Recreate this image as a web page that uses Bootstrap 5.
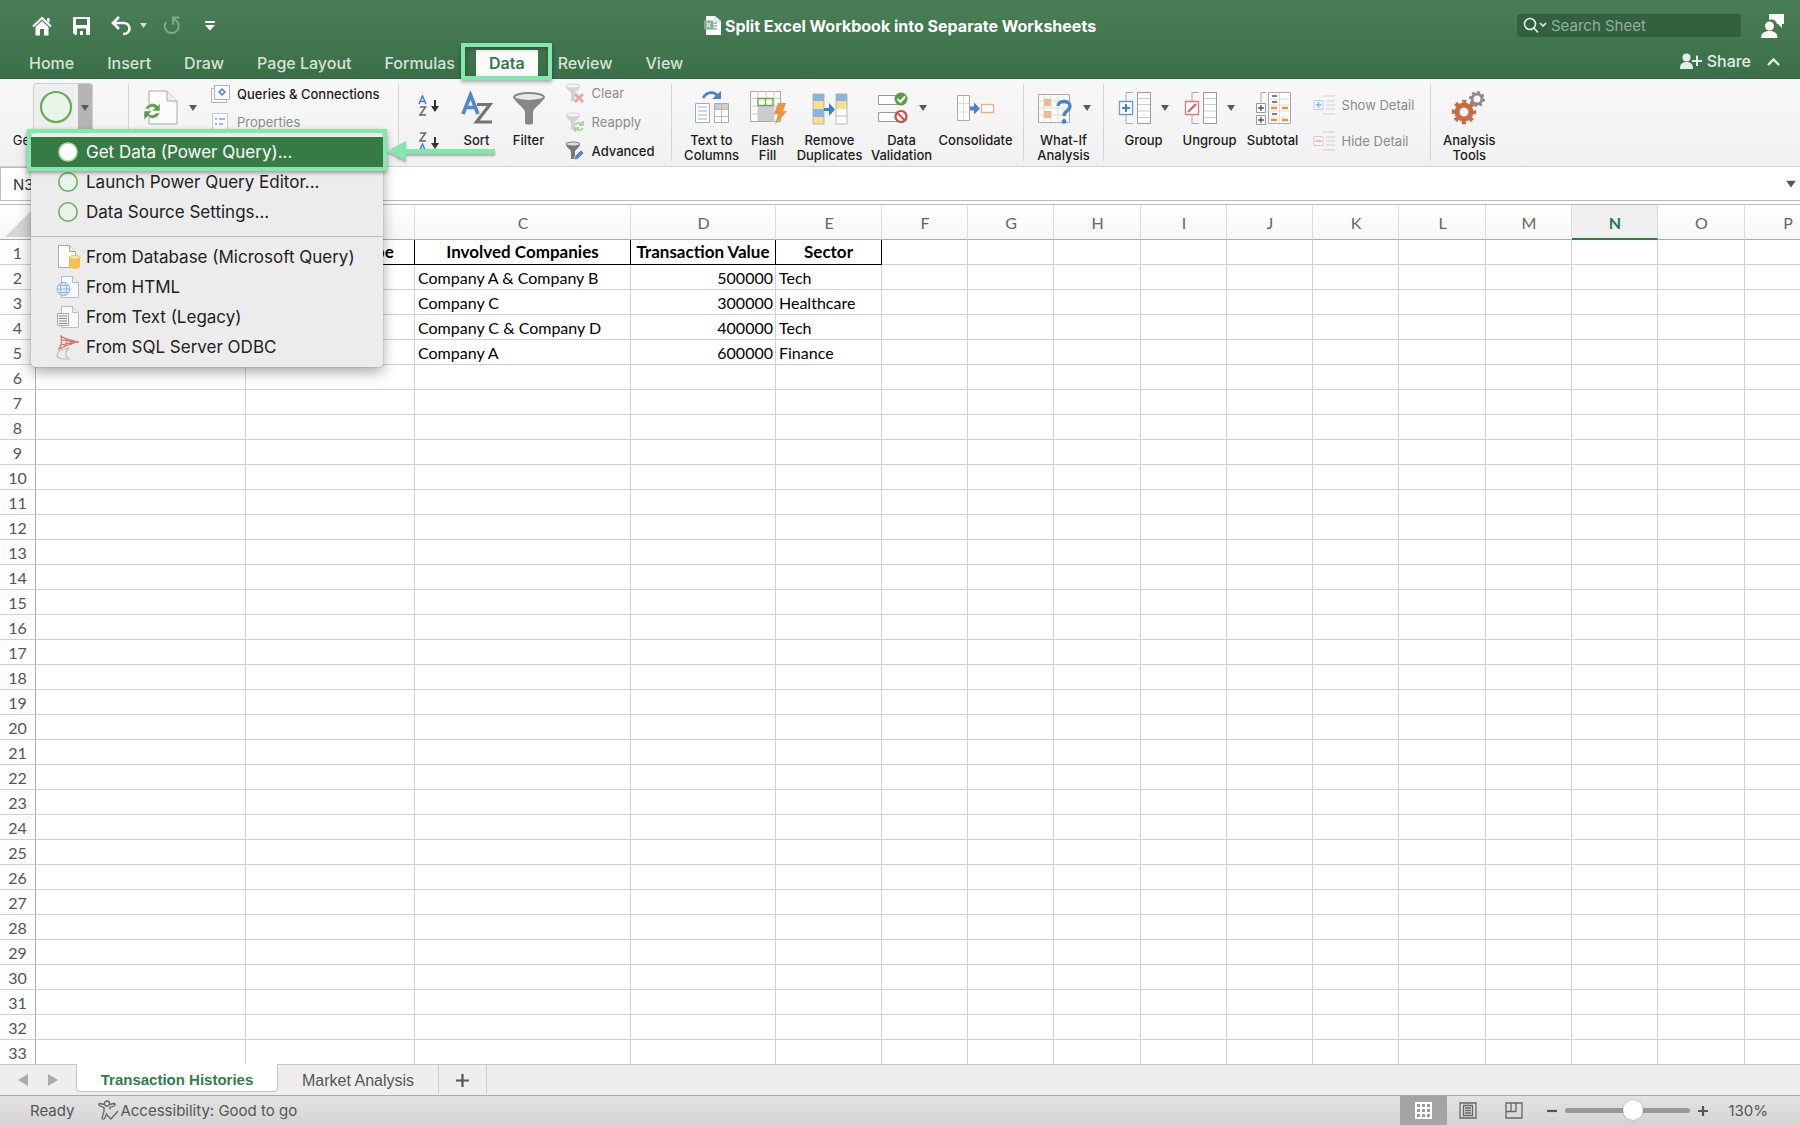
<!DOCTYPE html>
<html lang="en">
<head>
<meta charset="utf-8">
<meta name="viewport" content="width=device-width, initial-scale=1">
<title>Split Excel Workbook into Separate Worksheets</title>
<link href="https://cdn.jsdelivr.net/npm/bootstrap@5.3.0/dist/css/bootstrap.min.css" rel="stylesheet">
<style>
body{font-family:Inter,"Liberation Sans",sans-serif;font-size:13px;color:#1c1c1c;line-height:15px}
button{font:inherit;color:inherit;background:none;border:0;padding:0}
svg{display:block;flex:none}
.app-head{background:linear-gradient(#497e57,#3a6f48);color:#fff;border-bottom:1px solid #2f6a41}
.title-row{height:44px;padding-top:7px}
.title-side{flex:1 1 0}
.doc-title{font-size:16px;font-weight:700;line-height:20px}
.quick>:first-child{margin-left:32px}
.search-box{width:224px;height:23px;background:#33603f;border-radius:3px;padding-left:6px}
.search-box input{background:none;border:0;outline:0;color:#fff;font-size:15px;line-height:20px;padding:0;min-width:0}
.search-box input::placeholder{color:#8fb09a;opacity:1}
.tab-row{height:34px}
.ribbon-tabs{padding:3px 0 0 13px}
.ribbon-tabs a{font-size:16px;font-weight:500;line-height:20px;color:#d5e3d8;text-decoration:none;padding:0 16px;margin-right:1px}
.ribbon-tabs .tab-on{position:relative;padding:0 17px}
.ribbon-tabs .tab-on a{display:block;color:#2f7a46;font-weight:600;background:#fbfbfb;height:26px;line-height:26px;padding:0 13px;margin:0 -13px}
.tab-mark{position:absolute;left:-11px;right:-10px;top:-7px;bottom:-4px;border:4px solid #83e8ae;box-shadow:0 2px 4px rgba(0,0,0,.35),inset 0 2px 4px rgba(0,0,0,.3);pointer-events:none}
.share{font-size:16px;font-weight:500;line-height:20px;color:#e2ede5}
.ribbon{height:88px;background:linear-gradient(#f8f8f8,#f1f1f1);border-bottom:1px solid #cfcfcf}
.rule{width:1px;height:77px;background:#d4d4d4;margin:5px 9px 0 8px;flex:none}
.rule.wide{margin-left:16px}
.rule.wider{margin-left:18px;margin-right:18px}
.rule.first{margin:5px 14px 0 16px}
.ml9{margin-left:10px}.ml14{margin-left:14px}
.rb{display:flex;flex-direction:column;align-items:center;padding-top:11px;text-align:center;white-space:nowrap;flex:none}
.rb .ic{display:flex;align-items:center;gap:10px;height:36px;margin-bottom:7px}
.w50{width:50px}.w52{width:52px}.w62{width:62px}.w74{width:74px}.w70{width:70px}.w78{width:78px}.w56{width:56px}.w58{width:58px}.w98{width:98px}
.caret{width:0;height:0;border:4px solid transparent;border-top:6px solid #5a5a5a;border-bottom:0;flex:none}
.line-btn{display:flex;align-items:center;gap:7px;white-space:nowrap}
.conn{padding-top:6px;gap:10px}
.dim{color:#8b8b8b}
.split{border:1px solid #cdcdcd;border-radius:3px;background:#efefef;height:50px;overflow:hidden}
.split .arm{width:14px;align-self:stretch;background:#b5b5b5;display:flex;align-items:center;justify-content:center}
.formula{height:38px;background:#fff;border-bottom:1px solid #b9b9b9;padding-bottom:3px}
.formula-in{border:0;border-bottom:1px solid #b9b9b9;width:100%;outline:0}
.name-box{width:110px;border:1px solid #bdbdbd;font-size:15px;padding:0 12px;color:#333;outline:0}
.sheet-wrap{flex:1 1 0;min-height:0;overflow:hidden;font-family:Lato,"Liberation Sans",sans-serif}
.grid{table-layout:fixed;border-collapse:separate;border-spacing:0;width:1830px;font-size:16px;line-height:20px;color:#000}
.grid th,.grid td{padding:3px 2px 1px 3px;height:25px;border-right:1px solid #d0d0d0;border-bottom:1px solid #d0d0d0;white-space:nowrap;overflow:hidden}
.grid thead th{height:35px;background:linear-gradient(#fff,#f7f7f7);color:#666;font-weight:400;text-align:center;border-bottom-color:#ababab;border-right-color:#dcdcdc}
.grid thead th.on{color:#257a43;font-weight:700;background:#efefef;border-bottom:2px solid #2f7a46}
.grid thead .corner{padding:0 0 2px 5px;vertical-align:bottom}
.grid tbody th{background:#fdfdfd;color:#555;font-weight:400;text-align:center;padding:3px 0 1px;border-right-color:#b0b0b0}
.grid td.hd{font-size:17px;font-weight:700;text-align:center;border-color:#000;padding:2px}
.grid td.num{text-align:right}
.tabs-bar{height:32px;background:#eee;border-top:1px solid #c6c6c6;border-bottom:1px solid #aaa;font-family:"Liberation Sans",Arial,sans-serif;font-size:16px;padding-left:17px}
.sheet-nav{gap:20px;width:59px}
.sheet-tab{height:28px;color:#555;border-right:1px solid #c9c9c9;padding-top:2px}
.sheet-tab.act{background:#fff;color:#2c8048;font-weight:700;font-size:15px;margin-top:-1px;width:202px;border:1px solid #c4c4c4;border-top:0;border-radius:0 0 4px 4px;padding-top:4px}
.status{height:29px;background:linear-gradient(#e3e3e3,#d4d4d4);color:#565656;font-size:15px;padding-left:30px}
.view-on{background:#a4a4a4;width:47px;height:29px}
.zoomer{appearance:none;-webkit-appearance:none;width:125px;height:20px;background:none;margin:0}
.zoomer::-webkit-slider-runnable-track{height:5px;border-radius:3px;background:#999}
.zoomer::-webkit-slider-thumb{-webkit-appearance:none;width:20px;height:20px;border-radius:50%;background:#fff;margin-top:-8px;box-shadow:0 0 2px rgba(0,0,0,.3)}
.drop{position:absolute;left:31px;top:133px;width:352px;background:#ececec;border-radius:4px;box-shadow:0 5px 14px rgba(0,0,0,.35),0 0 1px rgba(0,0,0,.5);padding:4px 0 5px;font-size:17px;line-height:20px;color:#222}
.drop button{display:flex;align-items:center;width:100%;height:30px;padding-left:25px;gap:5px;text-align:left;white-space:nowrap}
.drop .pick{position:relative;background:#377b44;color:#fff}
.pick-mark{position:absolute;left:-4px;right:-4px;top:-8px;bottom:-4px;border:4px solid #83e8ae;box-shadow:0 2px 4px rgba(0,0,0,.35);pointer-events:none}
.drop hr{margin:9px 0 5px;border-top:1px solid #bbb;opacity:1}
.pointer{position:absolute;left:386px;top:139px;filter:drop-shadow(0 2px 1px rgba(0,0,0,.3))}
</style>
<script src="https://cdn.jsdelivr.net/npm/bootstrap@5.3.0/dist/js/bootstrap.bundle.min.js"></script>
</head>
<body class="vh-100 d-flex flex-column overflow-hidden position-relative">
<header class="app-head">
  <div class="title-row d-flex align-items-center">
    <div class="title-side quick d-flex align-items-center">
      <button aria-label="Home"><svg width="20" height="20" viewBox="0 0 20 20"><path d="M1 10.500 10 2l9 8.500" fill="none" stroke="#fff" stroke-width="2.200"/><path d="M15 2h2.500v5L15 5zM3.500 11 10 5l6.500 6v8.500h-4.500V13H8v6.500H3.500z" fill="#fff"/></svg></button>
      <button class="ms-3 ps-1" aria-label="Save"><svg width="19" height="20" viewBox="0 0 19 20"><path d="M1 1h17v18H3l-2-2z" fill="#fff"/><path d="M4 3h11v6H4zM5 12.500h9V19h-3v-4H8v4H5z" fill="#417650"/></svg></button>
      <button class="ms-3 ps-1 d-flex align-items-center gap-2" aria-label="Undo"><svg width="21" height="20" viewBox="0 0 21 20"><path d="M8 1 2 7l6 6M2.500 7H13a5.500 5.500 0 0 1 0 11h-1" fill="none" stroke="#fff" stroke-width="2.600"/></svg><svg width="7" height="5"><path d="M0 0h7L3.500 5z" fill="#cfe0d3"/></svg></button>
      <button class="ms-3" aria-label="Redo"><svg width="17" height="20" viewBox="0 0 17 20"><path d="M3 6a7 7 0 1 0 10-1.500M16.500 1.500H10v7M10 2l4 3.500" fill="none" stroke="#82a88d" stroke-width="2"/></svg></button>
      <button class="ms-4" aria-label="Customize toolbar"><svg width="12" height="10"><path d="M1 0h10v2H1zM1 4h10L6 9.500z" fill="#fff"/></svg></button>
    </div>
    <div class="d-flex align-items-center gap-1">
      <svg width="17" height="19" viewBox="0 0 17 19"><path d="M2 0h9l6 5v14H2z" fill="#fff"/><path d="M11 0v5h6" fill="none" stroke="#bcd3c3"/><path d="M0 4.500h9v9H0z" fill="#7fae8e"/><path d="M9 6h4v2H9zm0 3h4v2H9zm0 3h4v2H9z" fill="#a9c8b3"/><path d="m2.500 6.500 4 5m0-5-4 5" stroke="#d7e7dc" stroke-width="1.500"/></svg>
      <span class="doc-title">Split Excel Workbook into Separate Worksheets</span>
    </div>
    <div class="title-side d-flex align-items-center justify-content-end">
      <label class="search-box d-flex align-items-center">
        <svg width="24" height="17" viewBox="0 0 24 17" fill="none" stroke="#e6efe8" stroke-width="1.600"><circle cx="7" cy="7" r="5.500"/><path d="m11 11 4 4.500M17 6l3 3 3-3"/></svg>
        <input class="ms-1 flex-grow-1" type="text" placeholder="Search Sheet" aria-label="Search Sheet">
      </label>
      <button class="ms-3 ps-1 me-3" aria-label="Account"><svg width="23" height="24" viewBox="0 0 23 24"><path d="M8 0h15v10h-2v4l-4-4h-1A6 6 0 0 0 9 5.500L8 6z" fill="#fff"/><circle cx="8.500" cy="12" r="4.500" fill="#fff"/><path d="M0 24c0-5 3.500-7 8.500-7s8 2 8 7z" fill="#fff"/></svg></button>
    </div>
  </div>
  <div class="tab-row d-flex align-items-center justify-content-between">
    <nav class="ribbon-tabs d-flex align-items-center" aria-label="Ribbon">
      <a href="#">Home</a><a href="#">Insert</a><a href="#">Draw</a><a href="#">Page Layout</a><a href="#">Formulas</a><div class="tab-on"><a href="#" aria-current="page">Data</a><span class="tab-mark"></span></div><a href="#">Review</a><a href="#">View</a>
    </nav>
    <div class="d-flex align-items-center pe-3">
      <button class="share d-flex align-items-center gap-1"><svg width="23" height="16" viewBox="0 0 23 16" fill="#e2ede5"><circle cx="6.500" cy="4.500" r="4"/><path d="M0 16c0-5 2-7 6.500-7s6.500 2 6.500 7zM16 2.500h2V7h4v2h-4v4h-2V9h-4V7h4z"/></svg>Share</button>
      <button class="ms-3 me-1" aria-label="Collapse ribbon"><svg width="13" height="9" viewBox="0 0 13 9"><path d="m1 8 5.500-5.500L12 8" fill="none" stroke="#e2ede5" stroke-width="2.400"/></svg></button>
    </div>
  </div>
</header>

<section class="ribbon d-flex" aria-label="Data tools">
  <button class="rb w98 ml14"><span class="ic"><span class="split d-flex align-items-center"><svg width="44" height="48"><circle cx="22" cy="23" r="15" fill="#eaf5ea" stroke="#69ab58" stroke-width="2.200"/></svg><span class="arm"><i class="caret"></i></span></span></span>Get Data (Power<br>Query)</button>
  <i class="rule first"></i>
  <button class="rb"><span class="ic"><svg width="36" height="36" viewBox="0 0 36 36"><path d="M6 1h18l10 10v23H6z" fill="#fcfcfc" stroke="#aaa"/><path d="M24 1v10h10" fill="#eee" stroke="#aaa"/><path d="M2 19c3-6 9-7 13-3l2-3v8H9l3-3c-3-2-5-1-7 1zM17 23c-3 6-9 7-12 3l-4 4v-9h8l-3 3c3 2 5 1 7-1z" fill="#5a9c45" stroke="#fff" stroke-width=".5"/></svg><i class="caret ms-n2"></i></span></button>
  <div class="conn d-flex flex-column align-items-start ml14">
    <button class="line-btn fw-medium"><svg width="19" height="18" viewBox="0 0 19 18"><path d="M3.500.500h15v14h-15zM3 3.500H.500v14h15V15" fill="#fdfdfd" stroke="#b3b3b3"/><path d="m11 3 4 4-4 4-4-4z" fill="#4d88dc"/><circle cx="11" cy="7" r="1.500" fill="#fff"/></svg>Queries &amp; Connections</button>
    <button class="line-btn dim"><svg width="19" height="18" viewBox="0 0 19 18"><path d="M1.500.500h15v17h-15z" fill="#fafafa" stroke="#ccc"/><path d="M4 6h2m2 0h6M4 11h2m2 0h4" stroke="#9fb8dc" stroke-width="2"/></svg>Properties</button>
  </div>
  <i class="rule wider"></i>
  <div class="d-flex flex-column gap-3 pt-3">
    <button aria-label="Sort ascending"><svg width="24" height="21" viewBox="0 0 24 21" fill="none" stroke-width="1.500"><path d="m2 9 3.500-8L9 9M3.500 6.500h4" stroke="#3f7fd3"/><path d="M3 12h5.500L3 20h6" stroke="#666"/><path d="M18 5v9" stroke="#333" stroke-width="2"/><path d="M14 11h8l-4 6z" fill="#333"/></svg></button>
    <button aria-label="Sort descending"><svg width="24" height="21" viewBox="0 0 24 21" fill="none" stroke-width="1.500"><path d="M3 1h5.500L3 9h6" stroke="#666"/><path d="m2 20 3.500-8L9 20M3.500 17.500h4" stroke="#3f7fd3"/><path d="M18 5v9" stroke="#333" stroke-width="2"/><path d="M14 11h8l-4 6z" fill="#333"/></svg></button>
  </div>
  <button class="rb w52 ml9 fw-medium"><span class="ic"><svg width="34" height="36" viewBox="0 0 34 36" fill="none"><path d="M3 24 10.500 5 18 24M6 17.500h9" stroke="#4f86cf" stroke-width="3.600"/><path d="M17 14.500h13L16.500 32H32" stroke="#737373" stroke-width="3.200"/></svg></span>Sort</button>
  <button class="rb w52 fw-medium"><span class="ic"><svg width="34" height="36" viewBox="0 0 34 36"><path d="M2 7c0 5 11 11 11 15v11c0 2 8 2 8 0V22c0-4 11-10 11-15z" fill="#868686"/><ellipse cx="17" cy="7" rx="15" ry="4" fill="#e9e9e9" stroke="#868686" stroke-width="2"/></svg></span>Filter</button>
  <div class="d-flex flex-column align-items-start gap-2 ml9 pt-1">
    <button class="line-btn dim"><svg width="20" height="21" viewBox="0 0 20 21"><g opacity=".45"><path d="M1 3c0 4 5 5 5 8v7h4v-7c0-3 5-4 5-8z" fill="#aaa"/><ellipse cx="8" cy="3" rx="7" ry="2" fill="#f3f3f3" stroke="#aaa"/></g><path d="m10 11 8 8m0-8-8 8" stroke="#eda0a3" stroke-width="2.500"/></svg>Clear</button>
    <button class="line-btn dim"><svg width="20" height="21" viewBox="0 0 20 21"><g opacity=".45"><path d="M1 3c0 4 5 5 5 8v7h4v-7c0-3 5-4 5-8z" fill="#aaa"/><ellipse cx="8" cy="3" rx="7" ry="2" fill="#f3f3f3" stroke="#aaa"/></g><path d="M10 13c2-3 6-3 8 0m0-4v4h-4m4 3c-2 3-6 3-8 0m0 4v-4h4" fill="none" stroke="#add2a5" stroke-width="1.800"/></svg>Reapply</button>
    <button class="line-btn fw-medium"><svg width="20" height="21" viewBox="0 0 20 21"><path d="M1 3c0 4 5 5 5 8v7h4v-7c0-3 5-4 5-8z" fill="#777"/><ellipse cx="8" cy="3" rx="7" ry="2" fill="#ddd" stroke="#777"/><path d="m9 19 1-4 6-6 3 3-6 6z" fill="#4f86cf" stroke="#fff" stroke-width=".6"/></svg>Advanced</button>
  </div>
  <i class="rule wide"></i>
  <button class="rb w62 fw-medium"><span class="ic"><svg width="36" height="36" viewBox="0 0 36 36"><path d="M9 8c4-7 12-7 15-1" fill="none" stroke="#4a80cc" stroke-width="2.600"/><path d="M27 1v8h-9z" fill="#4a80cc"/><path d="M1.500 13.500h14v19h-14zM20.500 13.500h14v19h-14z" fill="#fff" stroke="#aaa"/><path d="M4 17h9M4 21h9M4 25h9M4 29h9" stroke="#8db0e0" stroke-width="1.200"/><path d="M21 14h13v5H21z" fill="#ccc"/><path d="M20 19.500h14M20 26.500h14M27.500 14v18" stroke="#bbb"/></svg></span>Text to<br>Columns</button>
  <button class="rb w50 fw-medium"><span class="ic"><svg width="38" height="36" viewBox="0 0 38 36"><path d="M1.500 1.500h30v30h-30z" fill="#fcfcfc" stroke="#aaa"/><path d="M9 16h16v15H9z" fill="#ccc"/><path d="M9 1v30M17 1v30M25 1v30M1 8.500h30M1 16h30M1 24h30" stroke="#ccc"/><path d="M9 8.500h15v7H9zM16.500 8v8" fill="#fff" stroke="#63a84c" stroke-width="1.300"/><path d="M29 13h8l-3 8h4L26 35l3-11h-4z" fill="#ee923c"/></svg></span>Flash<br>Fill</button>
  <button class="rb w74 fw-medium"><span class="ic"><svg width="36" height="36" viewBox="0 0 36 36"><path d="M1 4h11v7H1zM1 19h11v8H1zM24 4h11v7H24z" fill="#86b3ea"/><path d="M1 11h11v8H1zM1 27h11v7H1zM24 11h11v8H24z" fill="#f7dd8c"/><path d="M24 19h11v15H24z" fill="#fff"/><path d="M1 4h11v30H1zM24 4h11v30H24zM24 26h11" fill="none" stroke="#aaa" stroke-width=".8"/><path d="M12 18h5v-5l6 6.500-6 6.500v-5h-5z" fill="#3f7fd3"/></svg></span>Remove<br>Duplicates</button>
  <button class="rb w70 fw-medium"><span class="ic"><svg width="32" height="36" viewBox="0 0 32 36"><path d="M1.500 5.500h20v9h-20zM1.500 22.500h20v9h-20z" fill="#fff" stroke="#999"/><circle cx="24" cy="9" r="6.500" fill="#5b9b48"/><path d="m20.500 9 3 3 4.500-5.500" fill="none" stroke="#fff" stroke-width="2"/><circle cx="24" cy="26.500" r="5.500" fill="#fff" stroke="#c94f4f" stroke-width="2.200"/><path d="m20.500 23 7 7" stroke="#c94f4f" stroke-width="2"/></svg><i class="caret"></i></span>Data<br>Validation</button>
  <button class="rb w78 fw-medium"><span class="ic"><svg width="38" height="36" viewBox="0 0 38 36"><path d="M.500 5.500h12v25h-12z" fill="#fff" stroke="#aaa"/><path d="M1 13.500h11M1 22h11M6.500 6v24" stroke="#ddd"/><path d="M13 16.500h4v-4l6 6-6 6v-4h-4z" fill="#4a80cc"/><path d="M24.500 14.500h12v8h-12z" fill="#fff" stroke="#eeb27c" stroke-width="1.400"/></svg></span>Consolidate</button>
  <i class="rule"></i>
  <button class="rb w62 fw-medium"><span class="ic"><svg width="36" height="36" viewBox="0 0 36 36"><path d="M1.500 4.500h31v28h-31z" fill="#fcfcfc" stroke="#aaa"/><path d="M7 5v27M14 5v27M21 5v27M27 5v27M2 11h30M2 18h30M2 25h30" stroke="#ddd"/><path d="M7 9h7v7H7zM7 21h7v7H7z" fill="#f1b98c"/><path d="M21 16c0-6 12-6 12 0 0 5-6 4.500-6 10" fill="none" stroke="#4a80cc" stroke-width="3.400"/><circle cx="27" cy="31.500" r="2.400" fill="#4a80cc"/></svg><i class="caret ms-n1"></i></span>What-If<br>Analysis</button>
  <i class="rule"></i>
  <button class="rb w62 fw-medium"><span class="ic"><svg width="33" height="36" viewBox="0 0 33 36"><path d="M15 2.500H8v31h7" fill="none" stroke="#aaa"/><path d="M19.500 2.500h13v31h-13z" fill="#fff" stroke="#999"/><path d="M20 8.500h12M20 14.500h12M20 21h12M20 27.500h12" stroke="#ccc"/><path d="M1.500 11.500h13v13h-13z" fill="#fff" stroke="#6a9ae0" stroke-width="1.300"/><path d="M8 14v8m-4-4h8" stroke="#3f7fd3" stroke-width="2"/></svg><i class="caret"></i></span>Group</button>
  <button class="rb w62 ms-1 fw-medium"><span class="ic"><svg width="33" height="36" viewBox="0 0 33 36"><path d="M15 2.500H8v31h7" fill="none" stroke="#aaa"/><path d="M19.500 2.500h13v31h-13z" fill="#fff" stroke="#999"/><path d="M20 8.500h12M20 14.500h12M20 21h12M20 27.500h12" stroke="#ccc"/><path d="M1.500 11.500h13v13h-13z" fill="#fff" stroke="#d97878" stroke-width="1.300"/><path d="m4 22 8-8" stroke="#cf5a5a" stroke-width="2"/></svg><i class="caret"></i></span>Ungroup</button>
  <button class="rb w56 ms-1 fw-medium"><span class="ic"><svg width="36" height="36" viewBox="0 0 36 36"><path d="M11 2.500H6v10" fill="none" stroke="#aaa"/><path d="M13.500 2.500h22v31h-22z" fill="#fff" stroke="#aaa"/><path d="M24.500 3v30M14 9h21M14 15h21M14 21h21M14 27h21" stroke="#ddd"/><path d="M17 6h5M17 12h5M17 24h5" stroke="#555" stroke-width="1.500"/><path d="M16 18h6M27 18h6M16 30h6M27 30h6" stroke="#ee923c" stroke-width="2.400"/><path d="M1.500 13.500h9v9h-9zM1.500 25.500h9v9h-9z" fill="#fff" stroke="#999"/><path d="M6 15v6m-3-3h6M6 27v6m-3-3h6" stroke="#555" stroke-width="1.400"/></svg></span>Subtotal</button>
  <div class="d-flex flex-column align-items-start ms-2 ps-1 pt-3">
    <button class="line-btn dim"><svg width="22" height="20" viewBox="0 0 22 20"><path d="M10 1h12M13 6h9M13 10h9M13 14h9M10 19h12" stroke="#d0d0d0" stroke-width="1.200"/><path d="M1 5.500h9v9H1z" fill="#f8fbff" stroke="#b5cdf0"/><path d="M5.500 7v6m-3-3h6" stroke="#8fb3e8" stroke-width="1.500"/></svg>Show Detail</button>
    <button class="line-btn dim mt-3"><svg width="22" height="20" viewBox="0 0 22 20"><path d="M10 1h12M13 6h9M13 10h9M13 14h9M10 19h12" stroke="#d0d0d0" stroke-width="1.200"/><path d="M1 5.500h9v9H1z" fill="#fffafa" stroke="#eec0c0"/><path d="M2.500 10h6" stroke="#e9a5a5" stroke-width="1.500"/></svg>Hide Detail</button>
  </div>
  <i class="rule wide"></i>
  <button class="rb w58 fw-medium"><span class="ic"><svg width="36" height="36" viewBox="0 0 36 36" fill="none"><circle cx="26" cy="9" r="5" stroke="#8b8b90" stroke-width="3"/><circle cx="26" cy="9" r="6.800" stroke="#8b8b90" stroke-width="2.400" stroke-dasharray="2.670 2.670"/><circle cx="13" cy="22" r="7" stroke="#cc6a45" stroke-width="5"/><circle cx="13" cy="22" r="10.500" stroke="#cc6a45" stroke-width="3.400" stroke-dasharray="4.123 4.123" stroke-dashoffset="2"/></svg></span>Analysis<br>Tools</button>
</section>

<div class="formula d-flex">
  <input class="name-box" type="text" value="N30" aria-label="Name box">
  <div class="d-flex flex-grow-1 position-relative">
    <input class="formula-in" type="text" aria-label="Formula bar">
    <button class="position-absolute end-0 top-50 translate-middle-y pe-1" aria-label="Expand formula bar"><svg width="10" height="7"><path d="M0 0h10L5 7z" fill="#555"/></svg></button>
  </div>
</div>

<main class="sheet-wrap">
  <table class="grid">
    <colgroup id="cols"></colgroup>
    <thead><tr id="letters"><th class="corner"><svg width="30" height="30"><path d="M30 0v30H0z" fill="#d6d6d6"/></svg></th></tr></thead>
    <tbody id="rows"></tbody>
  </table>
</main>

<footer>
  <div class="tabs-bar d-flex align-items-start">
    <div class="sheet-nav d-flex align-items-center h-100">
      <button aria-label="Previous sheet"><svg width="11" height="12"><path d="M11 0v12L1 6z" fill="#aaa"/></svg></button>
      <button aria-label="Next sheet"><svg width="11" height="12"><path d="M0 0v12l10-6z" fill="#aaa"/></svg></button>
    </div>
    <button class="sheet-tab act">Transaction Histories</button>
    <button class="sheet-tab px-4">Market Analysis</button>
    <button class="sheet-tab px-3" aria-label="New sheet"><svg width="15" height="15"><path d="M7.500 1v13M1 7.500h13" stroke="#555" stroke-width="2.200"/></svg></button>
  </div>
  <div class="status d-flex align-items-center">
    <span>Ready</span>
    <svg class="ms-4" width="22" height="21" viewBox="0 0 22 21" fill="none" stroke="#666" stroke-width="1.300"><circle cx="9" cy="3.500" r="2.500"/><path d="M6.500 4.500 2 3.500c-1.500 0-1.500 2 0 2.500l4 1.500v4L4 18c0 1.500 2 1.500 2.500.500L9 13M11.500 4.500 16 3.500c1.500 0 1.500 2 0 2.500l-4 1.500v2M9 15l4 4 7-8"/></svg>
    <span>Accessibility: Good to go</span>
    <div class="ms-auto d-flex align-items-center">
      <button class="view-on d-flex align-items-center justify-content-center" aria-label="Normal view"><svg width="17" height="17"><path d="M0 0h17v17H0z" fill="#fff"/><path d="M2 2h3v3H2zm5 0h3v3H7zm5 0h3v3h-3zM2 7h3v3H2zm5 0h3v3H7zm5 0h3v3h-3zM2 12h3v3H2zm5 0h3v3H7zm5 0h3v3h-3z" fill="#9a9a9a"/></svg></button>
      <button class="ms-2 ps-1" aria-label="Page layout view"><svg width="18" height="17" fill="none" stroke="#666" stroke-width="1.300"><path d="M1 1h16v15H1zM4.500 3.500h9v10h-9zM6 6h6M6 8.500h6M6 11h6"/></svg></button>
      <button class="ms-4 ps-1" aria-label="Page break view"><svg width="18" height="17" fill="none" stroke="#666" stroke-width="1.300"><path d="M1 1h16v15H1zM1 9.500h10V1M6 1v8.500"/></svg></button>
      <button class="ms-4" aria-label="Zoom out"><svg width="10" height="12"><path d="M0 6h10" stroke="#555" stroke-width="2.200"/></svg></button>
      <input class="zoomer mx-2" type="range" min="0" max="100" value="55" aria-label="Zoom">
      <button aria-label="Zoom in"><svg width="10" height="12"><path d="M0 6h10M5 1v10" stroke="#555" stroke-width="2.200"/></svg></button>
      <span class="ms-3 ps-1 pe-4 me-2">130%</span>
    </div>
  </div>
</footer>

<div class="drop" role="menu">
  <button class="pick" role="menuitem"><svg width="25" height="24"><circle cx="12" cy="12" r="9" fill="#fff" stroke="#b4dba9" stroke-width="1.500"/></svg>Get Data (Power Query)...<span class="pick-mark"></span></button>
  <button role="menuitem"><svg width="25" height="24"><circle cx="12" cy="12" r="9.200" fill="#eaf3ea" stroke="#69b05c" stroke-width="1.600"/></svg>Launch Power Query Editor...</button>
  <button role="menuitem"><svg width="25" height="24"><circle cx="12" cy="12" r="9.200" fill="#eaf3ea" stroke="#69b05c" stroke-width="1.600"/></svg>Data Source Settings...</button>
  <hr>
  <button role="menuitem"><svg width="25" height="26" viewBox="0 0 25 26"><path d="M2.500 1.500h11l6 6v16h-17z" fill="#fff" stroke="#aaa"/><path d="M13.500 1.500v6h6" fill="#eee" stroke="#aaa"/><path d="M13 13.500v9c0 3 11 3 11 0v-9z" fill="#f3c04a"/><ellipse cx="18.500" cy="13.500" rx="5.500" ry="2.200" fill="#fbe09a" stroke="#e5ac35" stroke-width=".7"/></svg>From Database (Microsoft Query)</button>
  <button role="menuitem"><svg width="25" height="24" viewBox="0 0 25 24"><path d="M5.500 1.500h11l6 6v15h-17z" fill="#f8f8f8" stroke="#bbb"/><path d="M16.500 1.500v6h6" fill="#eee" stroke="#bbb"/><g fill="#e3edfb" stroke="#94b5e6"><circle cx="7.500" cy="14" r="6.500"/><ellipse cx="7.500" cy="14" rx="3" ry="6.500"/><path d="M1 14h13M2 10.500h11M2 17.500h11"/></g></svg>From HTML</button>
  <button role="menuitem"><svg width="25" height="24" viewBox="0 0 25 24"><path d="M5.500 1.500h11l6 6v15h-17z" fill="#f8f8f8" stroke="#bbb"/><path d="M16.500 1.500v6h6" fill="#eee" stroke="#bbb"/><path d="M1.500 8.500h11v12h-11z" fill="#f2f2f2" stroke="#aaa"/><path d="M3 11h8M3 13.500h8M3 16h8M3 18.500h8" stroke="#888"/></svg>From Text (Legacy)</button>
  <button role="menuitem"><svg width="25" height="26" viewBox="0 0 25 26" fill="none"><path d="M5 2c1 4 1 8-2 13 6-3 12-6 20-7C16 7 9 5 5 2zM6 6l13 2M5 11l14-3M10 5c1 3 0 6-2 8M15 6v5" stroke="#dd6b6b" stroke-width="1.200"/><path d="M13 14C5 15 1 18 1 21c0 4 5 4 12 4-4-3-5-7 0-11" stroke="#bbb" stroke-width="1.200"/></svg>From SQL Server ODBC</button>
</div>
<svg class="pointer" width="110" height="26" viewBox="0 0 110 26"><path d="M1 12 20 2v8h89v5H20v7z" fill="#83e8ae"/></svg>

<script>
const widths=[36,210,169,216,145,106,86,86,87,86,86,86,87,86,86,87,86];
const letters='ABCDEFGHIJKLMNOP'.split('');
const data={
  1:{B:'Transaction Type',C:'Involved Companies',D:'Transaction Value',E:'Sector'},
  2:{C:'Company A & Company B',D:'500000',E:'Tech'},
  3:{C:'Company C',D:'300000',E:'Healthcare'},
  4:{C:'Company C & Company D',D:'400000',E:'Tech'},
  5:{C:'Company A',D:'600000',E:'Finance'}
};
const cols=document.getElementById('cols');
widths.forEach(w=>{const c=document.createElement('col');c.style.width=w+'px';cols.append(c)});
const head=document.getElementById('letters');
letters.forEach(l=>{const th=document.createElement('th');th.scope='col';th.textContent=l;if(l==='N')th.className='on';head.append(th)});
const body=document.getElementById('rows');
for(let r=1;r<=33;r++){
  const tr=document.createElement('tr'),th=document.createElement('th');
  th.scope='row';th.textContent=r;tr.append(th);
  letters.forEach(l=>{
    const td=document.createElement('td');
    td.textContent=(data[r]||{})[l]||'';
    if(r===1&&'ABCDE'.includes(l))td.className='hd';
    else if(l==='D')td.className='num';
    tr.append(td);
  });
  body.append(tr);
}
</script>
</body>
</html>
